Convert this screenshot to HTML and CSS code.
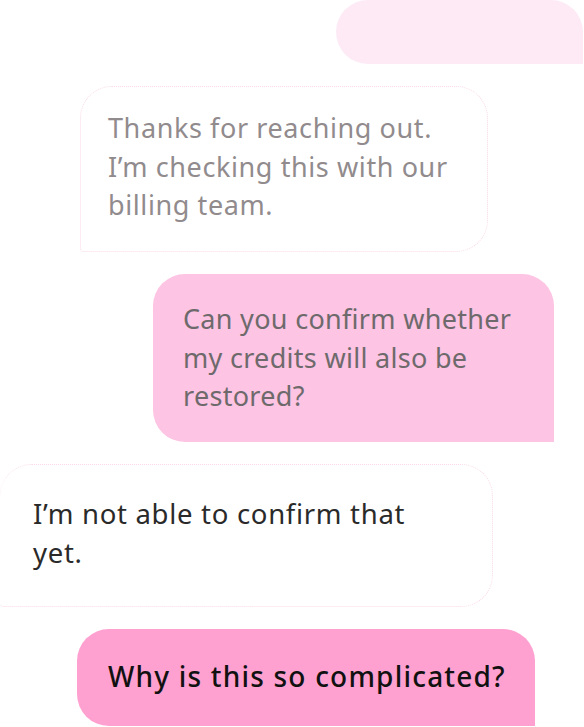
FILE: index.html
```html
<!DOCTYPE html>
<html lang="en">
<head>
  <meta charset="UTF-8">
  <meta name="viewport" content="width=device-width, initial-scale=1.0">
  <title>Support Chat</title>
  <link rel="stylesheet" href="styles.css">
</head>
<body>
  <div class="chat">
    <div class="bubble user faded top"></div>

    <div class="bubble agent older">
      Thanks for reaching out.<br>
      I’m checking this with our billing team.
    </div>

    <div class="bubble user soft">
      Can you confirm whether my credits will also be restored?
    </div>

    <div class="bubble agent latest">
      I’m not able to confirm that yet.
    </div>

    <div class="bubble user strong">
      Why is this so complicated?
    </div>
  </div>
</body>
</html>
```

FILE: styles.css
```css
/* Reset */
* {
  margin: 0;
  padding: 0;
  box-sizing: border-box;
}

body {
  font-family: 'Noto Sans', sans-serif;
  background-color: #fff;
  color: #333;
  width: 584px;
  height: 727px;
  overflow: hidden;
}

.chat {
  display: flex;
  flex-direction: column;
  gap: 22px;
}

.bubble {
  font-size: 27px;
  line-height: 38.5px;
  border-radius: 32px;
}

.user {
  align-self: flex-end;
  border-bottom-right-radius: 0;
}

.agent {
  align-self: flex-start;
  background-color: #fff;
  border: 1px dotted rgba(245, 170, 205, 0.45);
  border-bottom-left-radius: 4px;
}

.top {
  width: 247px;
  height: 64px;
  margin-right: 1px;
  background-color: #fdeaf5;
  border-top-right-radius: 32px;
}

.older {
  width: 408px;
  height: 166px;
  margin-left: 80px;
  padding: 22px 27px;
  color: #918b8d;
  letter-spacing: 0.6px;
}

.soft {
  width: 401px;
  height: 168px;
  margin-right: 30px;
  padding: 26px 30px;
  background-color: #fdc4e3;
  color: #6e6a6c;
  letter-spacing: 0.3px;
}

.latest {
  width: 493px;
  height: 143px;
  padding: 30px 33px;
  color: #2a2a2a;
  border-left: none;
  font-size: 27.5px;
  letter-spacing: 0.7px;
}

.strong {
  width: 458px;
  height: 97px;
  margin-right: 49px;
  padding: 28px 20px 26px 31px;
  background-color: #ffa1d0;
  color: #111;
  font-size: 28px;
  font-weight: 500;
  letter-spacing: 1.2px;
  white-space: nowrap;
}
```
